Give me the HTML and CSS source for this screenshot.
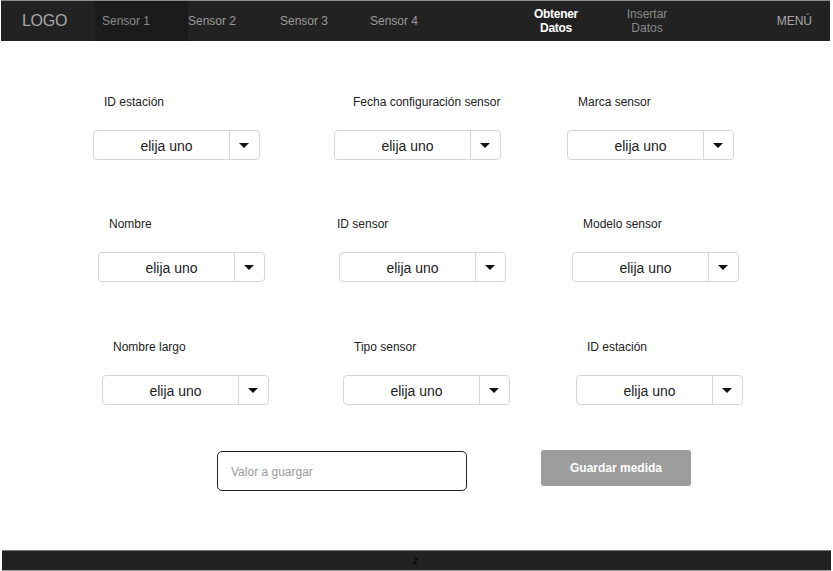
FILE: index.html
```html
<!DOCTYPE html>
<html lang="es">
<head>
<meta charset="utf-8">
<title>Obtener Datos</title>
<link rel="stylesheet" href="styles.css">
</head>
<body>
<header class="nav">
  <div class="logo">LOGO</div>
  <a class="nav-item active s1">Sensor 1</a>
  <a class="nav-item s2">Sensor 2</a>
  <a class="nav-item s3">Sensor 3</a>
  <a class="nav-item s4">Sensor 4</a>
  <a class="nav-item two current">Obtener<br>Datos</a>
  <a class="nav-item two dim">Insertar<br>Datos</a>
  <a class="nav-item menu">MENÚ</a>
</header>

<main class="form">
  <div class="row r1">
    <div class="field"><label class="lbl">ID estación</label><div class="select"><span class="val">elija uno</span><span class="caret"></span></div></div>
    <div class="field"><label class="lbl wide">Fecha configuración sensor</label><div class="select"><span class="val">elija uno</span><span class="caret"></span></div></div>
    <div class="field"><label class="lbl">Marca sensor</label><div class="select"><span class="val">elija uno</span><span class="caret"></span></div></div>
  </div>
  <div class="row r2">
    <div class="field"><label class="lbl">Nombre</label><div class="select"><span class="val">elija uno</span><span class="caret"></span></div></div>
    <div class="field"><label class="lbl neg">ID sensor</label><div class="select"><span class="val">elija uno</span><span class="caret"></span></div></div>
    <div class="field"><label class="lbl">Modelo sensor</label><div class="select"><span class="val">elija uno</span><span class="caret"></span></div></div>
  </div>
  <div class="row r3">
    <div class="field"><label class="lbl">Nombre largo</label><div class="select"><span class="val">elija uno</span><span class="caret"></span></div></div>
    <div class="field"><label class="lbl">Tipo sensor</label><div class="select"><span class="val">elija uno</span><span class="caret"></span></div></div>
    <div class="field"><label class="lbl">ID estación</label><div class="select"><span class="val">elija uno</span><span class="caret"></span></div></div>
  </div>
  <div class="actions">
    <input class="value-input" type="text" placeholder="Valor a guargar">
    <button class="save-btn" type="button">Guardar medida</button>
  </div>
</main>

<footer class="footer">z</footer>
</body>
</html>
```
FILE: styles.css
```css
* { box-sizing: border-box; }
html, body { margin: 0; padding: 0; background: #fff; }
body {
  font-family: "Liberation Sans", Arial, Helvetica, sans-serif;
  color: #222;
  width: 833px;
  height: 571px;
  overflow: hidden;
}

/* NAV */
.nav {
  display: flex;
  align-items: stretch;
  height: 41px;
  margin: 0 3px 0 1px;
  background: #222;
  border-top: 1px solid #8c8c8c;
}
.logo {
  width: 94px;
  padding-left: 21px;
  display: flex;
  align-items: center;
  font-size: 16px;
  color: #a8a8a8;
  letter-spacing: -0.3px;
}
.nav-item {
  display: flex;
  align-items: center;
  font-size: 12px;
  color: #9a9a9a;
  text-decoration: none;
}
.nav-item.active { background: #1b1b1b; color: #8a8a8a; }
.s1 { width: 93px; padding-left: 7px; }
.s2 { width: 92px; }
.s3 { width: 90px; }
.s4 { width: 146px; }
.two {
  width: 80px;
  justify-content: center;
  text-align: center;
  line-height: 14px;
  padding-bottom: 1px;
}
.current { color: #fff; font-weight: bold; letter-spacing: -0.3px; }
.dim { width: 102px; color: #8a8a8a; }
.menu { margin-left: auto; padding-right: 18px; color: #a8a8a8; }

/* FORM */
.form { padding-top: 54px; }
.row { display: flex; }
.r1 { padding-left: 93px; }
.r2 { padding-left: 98px; margin-top: 57px; }
.r3 { padding-left: 102px; margin-top: 58px; }
.field { display: flex; flex-direction: column; align-items: flex-start; }
.field:nth-child(1) { width: 241px; }
.field:nth-child(2) { width: 233px; }
.lbl {
  font-size: 12px;
  line-height: 14px;
  padding-left: 11px;
  color: #222;
}
.lbl.wide { padding-left: 19px; }
.lbl.neg { padding-left: 0; margin-left: -2px; }
.select {
  margin-top: 21px;
  width: 167px;
  height: 30px;
  border: 1px solid #d6d6d6;
  border-radius: 4px;
  display: flex;
  background: #fff;
}
.val {
  width: 136px;
  border-right: 1px solid #d6d6d6;
  display: flex;
  align-items: center;
  justify-content: center;
  padding: 2px 0 0 10px;
  font-size: 14px;
  color: #222;
}
.caret {
  flex: 1;
  display: flex;
  align-items: center;
  justify-content: center;
}
.caret::before {
  content: "";
  width: 0;
  height: 0;
  margin-left: -1px;
  border-left: 5px solid transparent;
  border-right: 5px solid transparent;
  border-top: 5px solid #111;
}

/* ACTIONS */
.actions {
  display: flex;
  align-items: flex-start;
  margin-top: 45px;
  padding-left: 217px;
}
.value-input {
  margin: 1px 0 0 0;
  width: 250px;
  height: 40px;
  border: 1px solid #222;
  border-radius: 5px;
  padding: 2px 0 0 13px;
  font-family: inherit;
  font-size: 12px;
  color: #222;
  outline: none;
}
.value-input::placeholder { color: #9a9a9a; }
.save-btn {
  margin-left: 74px;
  width: 150px;
  height: 36px;
  border: none;
  border-radius: 3px;
  background: #9d9d9d;
  color: #fff;
  font-family: inherit;
  font-size: 12px;
  font-weight: bold;
  padding: 0;
}

/* FOOTER */
.footer {
  margin: 59px 2px 0 2px;
  height: 21px;
  background: #222;
  border-top: 1px solid #777;
  border-bottom: 1px solid #9a9a9a;
  text-align: center;
  font-size: 11px;
  line-height: 19px;
  color: #000;
  padding-right: 2px;
}
```
